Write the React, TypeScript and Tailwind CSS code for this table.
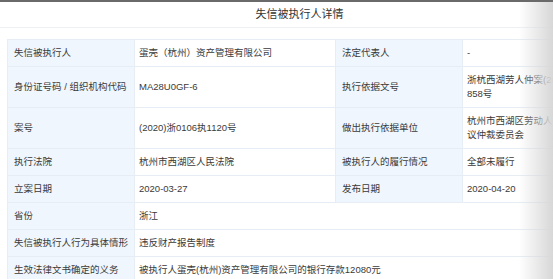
const font = { fontFamily: '"Liberation Sans", "Noto Sans CJK SC", sans-serif' };

function Label({ children }: { children: React.ReactNode }) {
  return (
    <td className="bg-[#eff6fd] border border-[#e6edf5] px-[6px] py-[6px] align-middle whitespace-nowrap">
      {children}
    </td>
  );
}

function Value({ children, span }: { children: React.ReactNode; span?: number }) {
  return (
    <td colSpan={span} className="bg-white border border-[#e6edf5] px-[4px] py-[6px] align-middle">
      {children}
    </td>
  );
}

export default function App() {
  return (
    <div className="relative w-[553px] h-[279px] overflow-hidden bg-white" style={font}>
      {/* top edge */}
      <div className="h-[2px] bg-[#6a6a6a]" />

      <div className="h-[26px] border-b border-[#eef1f4] flex items-center justify-center pl-[46px] text-[11px] text-[#333]">
        失信被执行人详情
      </div>

      <div className="pt-[11px] pl-[7px]">
        <table className="w-[577px] min-w-[577px] border-collapse table-fixed text-[9.5px] leading-[14px] text-[#3a3a3a]">
          <colgroup>
            <col className="w-[127px]" />
            <col className="w-[201px]" />
            <col className="w-[127px]" />
            <col className="w-[122px]" />
          </colgroup>
          <tbody>
            <tr>
              <Label>失信被执行人</Label>
              <Value>蛋壳（杭州）资产管理有限公司</Value>
              <Label>法定代表人</Label>
              <Value>-</Value>
            </tr>
            <tr>
              <Label>身份证号码 / 组织机构代码</Label>
              <Value>MA28U0GF-6</Value>
              <Label>执行依据文号</Label>
              <Value>
                浙杭西湖劳人仲案(2020)<wbr />858号
              </Value>
            </tr>
            <tr>
              <Label>案号</Label>
              <Value>(2020)浙0106执1120号</Value>
              <Label>做出执行依据单位</Label>
              <Value>杭州市西湖区劳动人事争议仲裁委员会</Value>
            </tr>
            <tr>
              <Label>执行法院</Label>
              <Value>杭州市西湖区人民法院</Value>
              <Label>被执行人的履行情况</Label>
              <Value>全部未履行</Value>
            </tr>
            <tr>
              <Label>立案日期</Label>
              <Value>2020-03-27</Value>
              <Label>发布日期</Label>
              <Value>2020-04-20</Value>
            </tr>
            <tr>
              <Label>省份</Label>
              <Value span={3}>浙江</Value>
            </tr>
            <tr>
              <Label>失信被执行人行为具体情形</Label>
              <Value span={3}>违反财产报告制度</Value>
            </tr>
            <tr>
              <Label>生效法律文书确定的义务</Label>
              <Value span={3}>被执行人蛋壳(杭州)资产管理有限公司的银行存款12080元</Value>
            </tr>
          </tbody>
        </table>
      </div>

      {/* right edge shade */}
      <div className="absolute right-0 top-[2px] bottom-0 w-[34px] bg-gradient-to-r from-white/0 to-[#d7d7d7]" />
    </div>
  );
}
